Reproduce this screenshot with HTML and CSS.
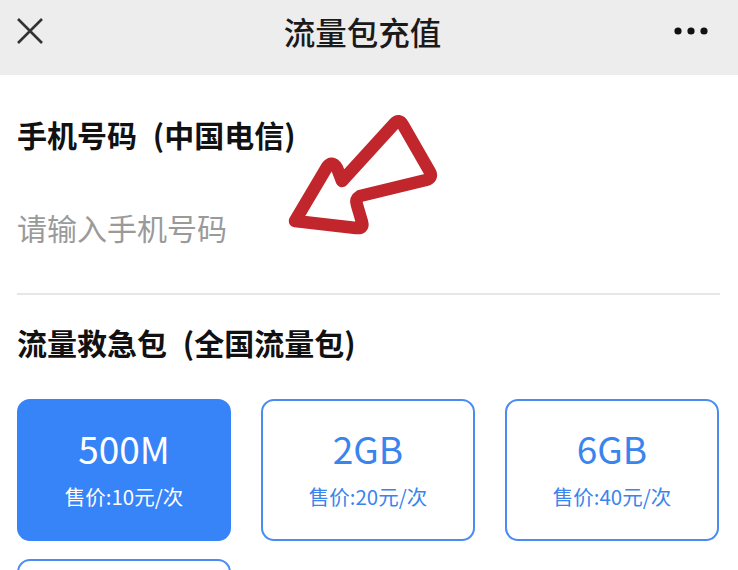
FILE: index.html
```html
<!DOCTYPE html>
<html lang="zh-CN">
<head>
<meta charset="utf-8">
<title>流量包充值</title>
<link rel="stylesheet" href="styles.css">
</head>
<body>
<div class="page">
  <header class="topbar">
    <span class="icon-close">
      <svg width="28" height="28" viewBox="0 0 28 28"><path d="M2 2 L26 26 M26 2 L2 26" stroke="#333" stroke-width="2.6" fill="none"/></svg>
    </span>
    <h1 class="title">流量包充值</h1>
    <span class="icon-more">
      <svg width="36" height="10" viewBox="0 0 36 10"><circle cx="5" cy="5" r="3.6" fill="#111"/><circle cx="18" cy="5" r="3.6" fill="#111"/><circle cx="31" cy="5" r="3.6" fill="#111"/></svg>
    </span>
  </header>

  <main class="content">
    <section class="phone">
      <div class="label">手机号码 (中国电信)</div>
      <div class="placeholder">请输入手机号码</div>
    </section>
    <div class="divider"></div>
    <section class="packs">
      <div class="label">流量救急包 (全国流量包)</div>
      <div class="grid">
        <div class="card active"><div class="size">500M</div><div class="price">售价:10元/次</div></div>
        <div class="card"><div class="size">2GB</div><div class="price">售价:20元/次</div></div>
        <div class="card"><div class="size">6GB</div><div class="price">售价:40元/次</div></div>
        <div class="card"></div>
      </div>
    </section>
  </main>

  <svg class="arrow" width="738" height="570" viewBox="0 0 738 570">
    <path d="M295 221 L327 167 Q332 160 337 168 L342 181 L394 124 Q399 118 403 125 L430 172 Q433 178 426 180 L360 196 Q355 199 357 205 L362 222 Q364 229 356 228 Z" fill="none" stroke="#c0262c" stroke-width="12.5" stroke-linejoin="round" stroke-linecap="round"/>
  </svg>
</div>
</body>
</html>
```

FILE: styles.css
```css
* { box-sizing: border-box; }
html, body { margin: 0; padding: 0; background: #fff; }
body {
  font-family: "Noto Sans CJK SC", "Noto Sans", sans-serif;
  width: 738px;
  height: 570px;
  overflow: hidden;
}
.page { position: relative; width: 738px; height: 570px; overflow: hidden; }
.topbar {
  height: 75px;
  background: #ededed;
  display: flex;
  align-items: center;
  justify-content: space-between;
  padding: 0 29px 4px 16px;
  position: relative;
}
.icon-close { display: flex; margin-top: -10px; }
.icon-more { display: flex; margin-top: -10px; }
.title {
  position: absolute;
  left: 0; right: 13px; top: 11px;
  margin: 0;
  text-align: center;
  font-size: 31.5px;
  line-height: 40px;
  font-weight: 500;
  color: #1a1a1a;
  pointer-events: none;
}
.content { padding: 0 18px 0 17px; }
.label {
  font-size: 30px;
  line-height: 40px;
  font-weight: 700;
  color: #111;
  word-spacing: 9px;
}
.phone { padding-top: 39px; }
.placeholder {
  margin-top: 53px;
  font-size: 30px;
  line-height: 40px;
  color: #9a9a9a;
}
.divider {
  margin-top: 46px;
  height: 2px;
  background: #e6e6e6;
}
.packs { padding-top: 27px; }
.grid {
  margin-top: 37px;
  display: grid;
  grid-template-columns: repeat(3, 214px);
  column-gap: 30px;
  row-gap: 18px;
}
.card {
  height: 142px;
  border: 2px solid #4a8cf2;
  border-radius: 13px;
  display: flex;
  flex-direction: column;
  align-items: center;
  padding-top: 25px;
  color: #3a84ee;
  background: #fff;
}
.card.active {
  background: #3783f8;
  border-color: #3783f8;
  color: #fff;
}
.size {
  font-size: 37px;
  line-height: 44px;
}
.price {
  margin-top: 12px;
  font-size: 20.5px;
  line-height: 28px;
}
.arrow {
  position: absolute;
  left: 0;
  top: 0;
  pointer-events: none;
}
```
